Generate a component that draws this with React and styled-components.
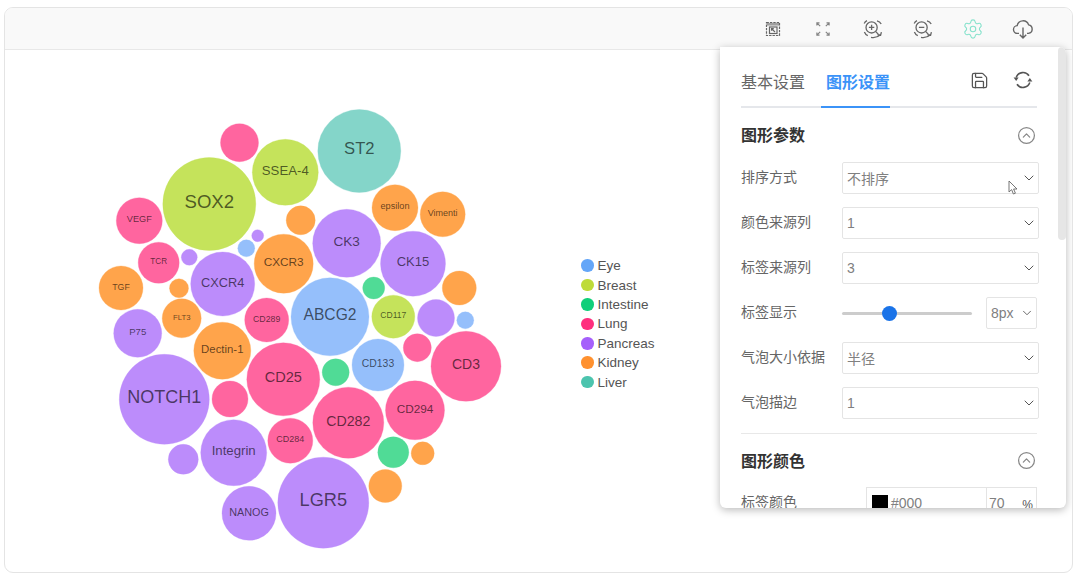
import React from "react";
import styled, { createGlobalStyle } from "styled-components";
import { ChevronDown, CircleChevronUp, Save, Settings } from "lucide-react";

const COLORS = {
  pink: "#ff659f",
  lime: "#c5e35b",
  teal: "#84d5c9",
  purple: "#bc8cfb",
  orange: "#ffa44b",
  blue: "#95bffb",
  green: "#50db96",
};

// x, y, r are page pixels, the svg viewBox starts where the chart body starts
const bubbles = [
  { x: 239.5, y: 142.7, r: 19, c: "pink" },
  { x: 285.3, y: 172.3, r: 33, c: "lime", t: "SSEA-4" },
  { x: 209.3, y: 204, r: 46.5, c: "lime", t: "SOX2" },
  { x: 139.3, y: 220.7, r: 23, c: "pink", t: "VEGF" },
  { x: 158.7, y: 262.7, r: 20.5, c: "pink", t: "TCR" },
  { x: 189.3, y: 257.3, r: 8, c: "purple" },
  { x: 246.3, y: 248.3, r: 8.5, c: "blue" },
  { x: 257.7, y: 235.7, r: 6, c: "purple" },
  { x: 222.7, y: 284, r: 32, c: "purple", t: "CXCR4" },
  { x: 283.7, y: 263.7, r: 29.5, c: "orange", t: "CXCR3" },
  { x: 121, y: 288, r: 22, c: "orange", t: "TGF" },
  { x: 179, y: 288.3, r: 9.5, c: "orange" },
  { x: 181.7, y: 318.3, r: 19.5, c: "orange", t: "FLT3" },
  { x: 266.7, y: 320, r: 22, c: "pink", t: "CD289" },
  { x: 137.7, y: 333.3, r: 24, c: "purple", t: "P75" },
  { x: 300.7, y: 220.3, r: 14.5, c: "orange" },
  { x: 359.3, y: 151, r: 41.5, c: "teal", t: "ST2" },
  { x: 395, y: 207.7, r: 23, c: "orange", t: "epsilon" },
  { x: 442.7, y: 214.3, r: 22.5, c: "orange", t: "Vimenti" },
  { x: 346.7, y: 243.3, r: 34, c: "purple", t: "CK3" },
  { x: 413, y: 263.7, r: 32.5, c: "purple", t: "CK15" },
  { x: 373.7, y: 288, r: 11, c: "green" },
  { x: 459.3, y: 288, r: 17, c: "orange" },
  { x: 330, y: 316.8, r: 39, c: "blue", t: "ABCG2" },
  { x: 393.3, y: 316.7, r: 21.5, c: "lime", t: "CD117" },
  { x: 436, y: 318, r: 18.5, c: "purple" },
  { x: 465.3, y: 320.3, r: 8.5, c: "blue" },
  { x: 222.3, y: 350.7, r: 28.5, c: "orange", t: "Dectin-1" },
  { x: 164.3, y: 399.3, r: 45, c: "purple", t: "NOTCH1" },
  { x: 283.3, y: 379.3, r: 36.5, c: "pink", t: "CD25" },
  { x: 230, y: 399, r: 18, c: "pink" },
  { x: 233.7, y: 452.7, r: 33, c: "purple", t: "Integrin" },
  { x: 183.3, y: 459.3, r: 15, c: "purple" },
  { x: 290.3, y: 440.7, r: 22.5, c: "pink", t: "CD284" },
  { x: 249, y: 513.3, r: 27, c: "purple", t: "NANOG" },
  { x: 323.3, y: 502.7, r: 45.5, c: "purple", t: "LGR5" },
  { x: 378, y: 365, r: 26, c: "blue", t: "CD133" },
  { x: 417.3, y: 347.7, r: 14, c: "pink" },
  { x: 466, y: 366.3, r: 35, c: "pink", t: "CD3" },
  { x: 335.7, y: 372.3, r: 13.5, c: "green" },
  { x: 348.3, y: 422.7, r: 35.5, c: "pink", t: "CD282" },
  { x: 415, y: 410.3, r: 29.5, c: "pink", t: "CD294" },
  { x: 393.3, y: 452.3, r: 15.5, c: "green" },
  { x: 422.7, y: 453.3, r: 11.5, c: "orange" },
  { x: 385.3, y: 486, r: 16.5, c: "orange" },
];

const legend = [
  { name: "Eye", color: "#64a6f8" },
  { name: "Breast", color: "#bedb39" },
  { name: "Intestine", color: "#10cf7a" },
  { name: "Lung", color: "#ff2f7e" },
  { name: "Pancreas", color: "#a55ffb" },
  { name: "Kidney", color: "#ff912f" },
  { name: "Liver", color: "#4cc4ae" },
];

const GlobalStyle = createGlobalStyle`
  html, body {
    margin: 0;
    padding: 0;
    background: #fff;
    overflow: hidden;
  }
  * {
    box-sizing: border-box;
  }
`;

const Page = styled.div`
  width: 1079px;
  height: 580px;
  padding: 7px 6px 7px 4px;
  font-family: "Liberation Sans", "Noto Sans CJK SC", sans-serif;
`;

const Frame = styled.div`
  position: relative;
  height: 100%;
  border: 1px solid #e4e4e4;
  border-radius: 9px;
  overflow: hidden;
`;

const Toolbar = styled.div`
  height: 42px;
  display: flex;
  align-items: center;
  justify-content: flex-end;
  gap: 24px;
  padding: 0 36px 0 0;
  background: #f9f9f9;
  border-bottom: 1px solid #e8e8e8;
`;

const ToolIcon = styled.span`
  width: 26px;
  height: 26px;
  display: flex;
  align-items: center;
  justify-content: center;
  color: ${(p) => (p.$active ? "#86e2cc" : "#666")};
`;

const ChartBody = styled.div`
  display: flex;
  align-items: flex-start;
`;

const ChartSvg = styled.svg`
  display: block;
  flex: none;
  width: 570px;
  height: 522px;
`;

const BubbleLabel = styled.text`
  font-family: "Liberation Sans", sans-serif;
  fill: #000;
  fill-opacity: 0.62;
  text-anchor: middle;
  dominant-baseline: central;
`;

const Legend = styled.ul`
  list-style: none;
  margin: 208px 0 0 6px;
  padding: 0;
  display: flex;
  flex-direction: column;
  gap: 4px;
`;

const LegendItem = styled.li`
  height: 15.4px;
  display: flex;
  align-items: center;
  gap: 4px;
  font-size: 13.5px;
  color: #555;
`;

const LegendDot = styled.i`
  width: 12.5px;
  height: 12.5px;
  border-radius: 50%;
  background: ${(p) => p.$color};
`;

const Panel = styled.div`
  position: absolute;
  top: 39px;
  left: 715px;
  width: 346px;
  height: 461px;
  padding: 0 29px 0 21px;
  background: #fff;
  border-radius: 0 6px 6px 6px;
  box-shadow: 0 2px 8px rgba(0, 0, 0, 0.28);
  overflow: hidden;
`;

const ScrollThumb = styled.div`
  position: absolute;
  top: 0;
  right: 0;
  width: 8px;
  height: 193px;
  background: #e6e6e6;
  border-radius: 4px;
`;

const TabBar = styled.div`
  height: 61px;
  display: flex;
  align-items: flex-end;
  gap: 16px;
  border-bottom: 2px solid #e5e7eb;
`;

const Tab = styled.div`
  height: 46px;
  margin-bottom: -2px;
  padding-left: ${(p) => (p.$active ? "5px" : "0")};
  line-height: 42px;
  font-size: 16px;
  color: ${(p) => (p.$active ? "#3b93f8" : "#666")};
  font-weight: ${(p) => (p.$active ? 600 : 400)};
  border-bottom: 2px solid ${(p) => (p.$active ? "#3b93f8" : "transparent")};
`;

const TabActions = styled.div`
  margin: 23px 4px 0 auto;
  align-self: flex-start;
  display: flex;
  align-items: center;
  gap: 24px;
  color: #555;
`;

const SectionHead = styled.div`
  height: ${(p) => p.$height}px;
  display: flex;
  align-items: center;
  justify-content: space-between;
  padding: 0 1px 0 0;
  color: #888;
  h3 {
    margin: -2px 0 0;
    font-size: 16px;
    font-weight: 600;
    color: #333;
  }
`;

const Rows = styled.div`
  display: flex;
  flex-direction: column;
  gap: 13px;
`;

const Row = styled.div`
  display: flex;
  align-items: center;
  height: 32px;
`;

const Label = styled.label`
  flex: none;
  width: 101px;
  padding-bottom: 4px;
  font-size: 14px;
  color: #666;
`;

const Select = styled.div`
  flex: ${(p) => (p.$small ? "none" : "1")};
  width: ${(p) => (p.$small ? "51px" : "auto")};
  height: 32px;
  margin-right: ${(p) => (p.$small ? "0" : "-2px")};
  padding: 0 ${(p) => (p.$small ? "2px" : "1px")} 0 4px;
  display: flex;
  align-items: center;
  justify-content: space-between;
  border: 1px solid #e4e4e4;
  border-radius: 2px;
  font-size: 14px;
  color: #808080;
  svg {
    color: #555;
  }
`;

const RangeInput = styled.input`
  appearance: none;
  width: 130px;
  height: 16px;
  margin: 0 14px 0 0;
  background: transparent;
  &::-webkit-slider-runnable-track {
    height: 3px;
    background: #ccc;
    border-radius: 2px;
  }
  &::-webkit-slider-thumb {
    appearance: none;
    width: 15px;
    height: 15px;
    margin-top: -6px;
    border-radius: 50%;
    background: #1a73e8;
  }
`;

const Divider = styled.hr`
  margin: 14px 0 0;
  border: 0;
  border-top: 1px solid #e8e8e8;
`;

const ColorField = styled.div`
  flex: 1;
  height: 32px;
  margin-left: 24px;
  display: flex;
  border: 1px solid #e4e4e4;
  font-size: 14px;
  color: #808080;
`;

const ColorValue = styled.div`
  flex: 1;
  display: flex;
  align-items: center;
  gap: 3px;
  padding-left: 5px;
`;

const Swatch = styled.i`
  width: 16px;
  height: 16px;
  background: ${(p) => p.$color};
`;

const Opacity = styled.div`
  width: 50px;
  display: flex;
  align-items: center;
  justify-content: space-between;
  padding: 0 3px 0 2px;
  border-left: 1px solid #e4e4e4;
  b {
    font-weight: 400;
    font-size: 12px;
    color: #555;
    padding-top: 3px;
  }
`;

const Pointer = styled.svg`
  position: absolute;
  top: 133px;
  left: 288px;
`;

const PinIcon = () => (
  <svg width="16" height="16" viewBox="0 0 16 16" fill="none" stroke="currentColor" strokeWidth="1.2">
    <rect x="1.5" y="1.5" width="13" height="13" strokeDasharray="2.4 1" />
    <rect x="2" y="2" width="12" height="2.6" fill="currentColor" fillOpacity="0.6" stroke="none" />
    <rect x="4.5" y="6" width="7.5" height="6.5" />
    <path d="M10 11 6.8 7.8M6.6 9.8V7.6h2.2" />
  </svg>
);

const FullIcon = () => (
  <svg width="14" height="14" viewBox="0 0 16 16" fill="none" stroke="currentColor" strokeWidth="1.3" opacity="0.8">
    <path d="M1 4V1h3M1.2 1.2 4.8 4.8" />
    <path d="M15 4V1h-3M14.8 1.2 11.2 4.8" />
    <path d="M1 12v3h3M1.2 14.8l3.6-3.6" />
    <path d="M15 12v3h-3M14.8 14.8l-3.6-3.6" />
  </svg>
);

const ZoomIcon = ({ plus }) => (
  <svg width="20" height="20" viewBox="0 0 20 20" fill="none" stroke="currentColor" strokeWidth="1.3">
    <circle cx="8.6" cy="8.4" r="5.6" />
    <path d="M5.9 8.4h5.4" />
    {plus && <path d="M8.6 5.7v5.4" />}
    <path d="M12.8 12.6 15.4 15.4" />
    <path d="M14 1.8c1.8.4 3.4 1.6 4.2 3.2" />
    <path d="M1.2 4.6C1.8 3.2 2.8 2.2 4 1.6" />
    <path d="M1.4 13c.6 1.6 1.8 3 3.4 3.6" />
    <path d="M8 18.4c3.4.6 6.8-.2 9.4-2.6M18.4 13.2l-.8 3-3-.6" />
  </svg>
);

const CloudIcon = () => (
  <svg width="22" height="22" viewBox="0 0 22 22" fill="none" stroke="currentColor" strokeWidth="1.4">
    <path d="M7 15.4H5.6a3.9 3.9 0 0 1-.4-7.8A5.9 5.9 0 0 1 16.6 6.9a4.3 4.3 0 0 1-.2 8.5H15" strokeLinejoin="round" />
    <path d="M11 9.6v10.2M7.8 16.8l3.2 3.2 3.2-3.2" />
  </svg>
);

const RefreshIcon = () => (
  <svg width="20" height="20" viewBox="0 0 20 20" fill="none" stroke="currentColor" strokeWidth="1.6">
    <path d="M3.2 7.4A7.2 7.2 0 0 1 16 5.8" />
    <path d="M16.8 12.6A7.2 7.2 0 0 1 4 14.2" />
    <path d="M.6 7.4h5L3.2 11z" fill="currentColor" stroke="none" />
    <path d="M19.4 11.6h-5L16.8 8z" fill="currentColor" stroke="none" />
  </svg>
);

const BubbleChart = () => (
  <ChartSvg viewBox="5 50 570 522">
    {bubbles.map((b, i) => (
      <g key={i}>
        <circle cx={b.x} cy={b.y} r={b.r} fill={COLORS[b.c]} stroke={COLORS[b.c]} strokeOpacity="0.3" />
        {b.t && (
          <BubbleLabel x={b.x} y={b.y - b.r * 0.06} fontSize={b.r * 0.4}>
            {b.t}
          </BubbleLabel>
        )}
      </g>
    ))}
  </ChartSvg>
);

const SelectField = ({ value, small }) => (
  <Select $small={small}>
    {value}
    <ChevronDown size={small ? 14 : 16} strokeWidth={1.5} />
  </Select>
);

export default function App() {
  return (
    <Page>
      <GlobalStyle />
      <Frame>
        <Toolbar>
          <ToolIcon><PinIcon /></ToolIcon>
          <ToolIcon><FullIcon /></ToolIcon>
          <ToolIcon><ZoomIcon plus /></ToolIcon>
          <ToolIcon><ZoomIcon /></ToolIcon>
          <ToolIcon $active><Settings size={22} strokeWidth={1.2} /></ToolIcon>
          <ToolIcon><CloudIcon /></ToolIcon>
        </Toolbar>
        <ChartBody>
          <BubbleChart />
          <Legend>
            {legend.map((l) => (
              <LegendItem key={l.name}>
                <LegendDot $color={l.color} />
                {l.name}
              </LegendItem>
            ))}
          </Legend>
        </ChartBody>
        <Panel>
          <ScrollThumb />
          <TabBar>
            <Tab>基本设置</Tab>
            <Tab $active>图形设置</Tab>
            <TabActions>
              <Save size={19} strokeWidth={1.6} />
              <RefreshIcon />
            </TabActions>
          </TabBar>
          <SectionHead $height={54}>
            <h3>图形参数</h3>
            <CircleChevronUp size={19} strokeWidth={1.6} />
          </SectionHead>
          <Rows>
            <Row>
              <Label>排序方式</Label>
              <SelectField value="不排序" />
            </Row>
            <Row>
              <Label>颜色来源列</Label>
              <SelectField value="1" />
            </Row>
            <Row>
              <Label>标签来源列</Label>
              <SelectField value="3" />
            </Row>
            <Row>
              <Label>标签显示</Label>
              <RangeInput type="range" min="0" max="100" defaultValue="35" />
              <SelectField value="8px" small />
            </Row>
            <Row>
              <Label>气泡大小依据</Label>
              <SelectField value="半径" />
            </Row>
            <Row>
              <Label>气泡描边</Label>
              <SelectField value="1" />
            </Row>
          </Rows>
          <Divider />
          <SectionHead $height={53}>
            <h3>图形颜色</h3>
            <CircleChevronUp size={19} strokeWidth={1.6} />
          </SectionHead>
          <Row>
            <Label>标签颜色</Label>
            <ColorField>
              <ColorValue>
                <Swatch $color="#000" />
                #000
              </ColorValue>
              <Opacity>
                70
                <b>%</b>
              </Opacity>
            </ColorField>
          </Row>
          <Pointer width="10" height="15" viewBox="0 0 10 15">
            <path d="M1 1v11l2.6-2.4L5.4 14l2-.8L5.6 9H9z" fill="#fff" stroke="#666" strokeWidth="0.9" />
          </Pointer>
        </Panel>
      </Frame>
    </Page>
  );
}
